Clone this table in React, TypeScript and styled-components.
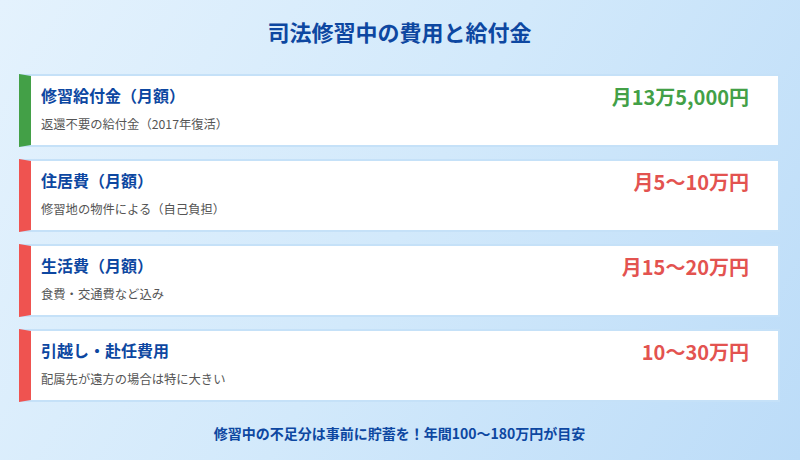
import React from 'react';
import styled, {createGlobalStyle} from 'styled-components';

type CostType = {
    title: string
    note: string
    value: string
    kind: 'benefit' | 'cost'
}

const costs: CostType[] = [
    {title: '修習給付金（月額）', note: '返還不要の給付金（2017年復活）', value: '月13万5,000円', kind: 'benefit'},
    {title: '住居費（月額）', note: '修習地の物件による（自己負担）', value: '月5〜10万円', kind: 'cost'},
    {title: '生活費（月額）', note: '食費・交通費など込み', value: '月15〜20万円', kind: 'cost'},
    {title: '引越し・赴任費用', note: '配属先が遠方の場合は特に大きい', value: '10〜30万円', kind: 'cost'},
]

const colors = {
    benefit: '#43a047',
    cost: '#ef5350',
}

const GlobalStyle = createGlobalStyle`
  html, body {
    margin: 0;
    padding: 0;
  }
  body {
    font-family: "Noto Sans CJK JP", "Noto Sans", sans-serif;
  }
`

export default function App() {
    return (
        <>
            <GlobalStyle/>
            <Page>
                <Heading>司法修習中の費用と給付金</Heading>
                <List>
                    {costs.map(c => (
                        <Card key={c.title} accent={colors[c.kind]}>
                            <Info>
                                <Title>{c.title}</Title>
                                <Note>{c.note}</Note>
                            </Info>
                            <Value color={c.kind === 'benefit' ? colors.benefit : '#e35350'}>{c.value}</Value>
                        </Card>
                    ))}
                </List>
                <Footer>修習中の不足分は事前に貯蓄を！年間100〜180万円が目安</Footer>
            </Page>
        </>
    );
}

const Page = styled.div`
  width: 800px;
  height: 460px;
  box-sizing: border-box;
  padding: 16px 20px 0 19px;
  background: linear-gradient(120deg, #e4f2fd 0%, #d2e9fb 50%, #bcdcf8 100%);
  display: flex;
  flex-direction: column;
`

const Heading = styled.h1`
  margin: 0 0 28px;
  text-align: center;
  font-size: 22px;
  line-height: 30px;
  font-weight: 700;
  color: #0d47a1;
`

const List = styled.div`
  display: flex;
  flex-direction: column;
  gap: 12px;
`

const Card = styled.div<{accent: string}>`
  height: 73px;
  box-sizing: border-box;
  background: #fff;
  border: 2px solid #c5e1f8;
  border-left: 12px solid ${props => props.accent};
  display: flex;
  justify-content: space-between;
  align-items: flex-start;
  padding: 7px 29px 0 10px;
`

const Info = styled.div`
  display: flex;
  flex-direction: column;
  gap: 8px;
`

const Title = styled.span`
  font-size: 16px;
  line-height: 24px;
  font-weight: 700;
  color: #0d47a1;
`

const Note = styled.span`
  font-size: 12.3px;
  line-height: 18px;
  color: #555;
`

const Value = styled.span`
  font-size: 20px;
  line-height: 28px;
  font-weight: 700;
  color: ${props => props.color};
`

const Footer = styled.p`
  margin: 21px 0 0;
  text-align: center;
  font-size: 14px;
  line-height: 20px;
  font-weight: 700;
  color: #0d47a1;
`
